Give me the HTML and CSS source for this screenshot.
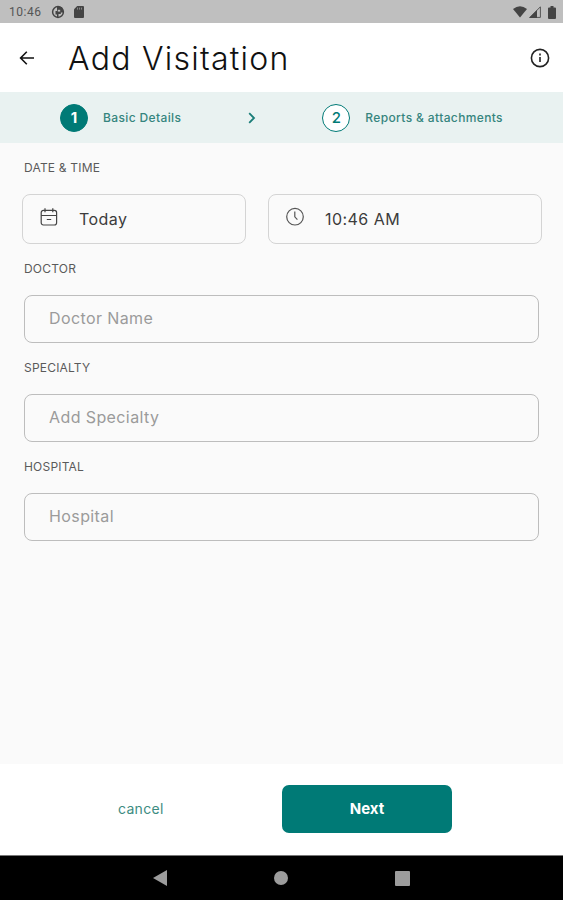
FILE: index.html
```
<!DOCTYPE html>
<html lang="en">
<head>
  <meta charset="UTF-8" />
  <meta name="viewport" content="width=device-width, initial-scale=1" />
  <title>Add Visitation</title>
  <link rel="stylesheet" href="styles.css">
</head>
<body>

  <div class="status-bar">
    <span class="status-time">10:46</span>
    <svg class="status-app" width="14" height="14" viewBox="0 0 14 14">
      <circle cx="7" cy="7" r="5.4" fill="none" stroke="#444" stroke-width="1.5" />
      <path d="M6 4.200V2h5l1.500 5.500H9.800V9H7.500v3.500H6V9.500H4.500V6H6z" fill="#444" />
      <path d="M6.800 4.800h2.400v1.800H6.800z" fill="#bfbfbf" />
    </svg>
    <svg class="status-card" width="10" height="12" viewBox="0 0 10 12">
      <path d="M3.2 0H9a1 1 0 0 1 1 1v10a1 1 0 0 1-1 1H1a1 1 0 0 1-1-1V3.2z" fill="#444" />
      <path d="M3.5 1.6v2M5.5 1.6v2M7.5 1.6v2" stroke="#999" stroke-width="0.8" />
    </svg>
    <div class="status-right">
      <svg width="14" height="12" viewBox="0 0 14 12">
        <path d="M0 3Q7-2.4 14 3L7 11.6z" fill="#444" />
      </svg>
      <svg width="12" height="12" viewBox="0 0 12 12">
        <path d="M11.4.8v10.6H.9z" fill="none" stroke="#555" stroke-width="1" />
        <path d="M8 4v8H0z" fill="#444" />
      </svg>
      <svg class="battery" width="8" height="13" viewBox="0 0 8 13">
        <path d="M2.5 0h3v1.4H7a1 1 0 0 1 1 1V12a1 1 0 0 1-1 1H1a1 1 0 0 1-1-1V2.400a1 1 0 0 1 1-1h1.500z" fill="#444" />
      </svg>
    </div>
  </div>

  <header class="header">
    <button class="icon-btn" aria-label="Back">
      <svg width="16" height="14" viewBox="0 0 16 14" fill="none" stroke="#111" stroke-width="1.6">
        <path d="M15 7H1.800M7.800 .8 1.600 7l6.200 6.200" />
      </svg>
    </button>
    <h1>Add Visitation</h1>
    <button class="icon-btn info" aria-label="Info">
      <svg width="20" height="20" viewBox="0 0 20 20" fill="none" stroke="#222" stroke-width="1.600">
        <circle cx="10" cy="10" r="8.600" />
        <path d="M10 9v5M10 5.600v1.800" />
      </svg>
    </button>
  </header>

  <div class="steps">
    <span class="step-number active">1</span>
    <span class="step-label">Basic Details</span>
    <svg class="chevron" width="8" height="12" viewBox="0 0 8 12" fill="none" stroke="#1a7d78" stroke-width="1.800">
      <path d="M1.200 1.200 6 6l-4.800 4.800" />
    </svg>
    <span class="step-number">2</span>
    <span class="step-label">Reports &amp; attachments</span>
  </div>

  <main class="form">
    <div class="label">DATE &amp; TIME</div>
    <div class="date-row">
      <button class="picker date">
        <svg width="18" height="20" viewBox="0 0 18 20" fill="none" stroke="#444" stroke-width="1.200">
          <rect x="1.200" y="3.300" width="15.400" height="14.700" rx="2.200" />
          <path d="M1.200 8.500h15.400M5 1.200v4M12.800 1.200v4M6.800 12.500h4.400" />
        </svg>
        <span>Today</span>
      </button>
      <button class="picker time">
        <svg width="18" height="20" viewBox="0 0 18 20" fill="none" stroke="#555" stroke-width="1.200">
          <circle cx="9" cy="9.700" r="8.300" />
          <path d="M8.800 4.500v5.300l2.600 2.800" />
        </svg>
        <span>10:46 AM</span>
      </button>
    </div>

    <label class="label" for="doctor">DOCTOR</label>
    <input type="text" id="doctor" placeholder="Doctor Name" />

    <label class="label" for="specialty">SPECIALTY</label>
    <input type="text" id="specialty" placeholder="Add Specialty" />

    <label class="label" for="hospital">HOSPITAL</label>
    <input type="text" id="hospital" placeholder="Hospital" />
  </main>

  <footer class="actions">
    <button class="cancel">cancel</button>
    <button class="next">Next</button>
  </footer>

  <nav class="nav-bar">
    <svg width="14" height="16" viewBox="0 0 14 16"><path d="M14 0v16L0 8z" fill="#9c9c9c" /></svg>
    <svg width="14" height="14" viewBox="0 0 14 14"><circle cx="7" cy="7" r="7" fill="#9c9c9c" /></svg>
    <svg width="15" height="15" viewBox="0 0 15 15"><rect width="15" height="15" rx="1" fill="#9c9c9c" /></svg>
  </nav>

</body>
</html>
```
FILE: styles.css
```
:root {
  --teal: #007a76;
  --page-bg: #fafafa;
  --step-bg: #e9f2f1;
}

* {
  box-sizing: border-box;
}

body {
  margin: 0;
  height: 100vh;
  display: flex;
  flex-direction: column;
  background: var(--page-bg);
  font-family: Inter, sans-serif;
  overflow: hidden;
}

button {
  border: none;
  background: none;
  padding: 0;
  font-family: inherit;
  cursor: pointer;
}

svg {
  display: block;
  flex-shrink: 0;
}

.status-bar {
  height: 23px;
  display: flex;
  align-items: center;
  padding: 1px 7px 0 9px;
  background: #bfbfbf;
}

.status-time {
  width: 42px;
  font-family: Roboto, sans-serif;
  font-size: 12px;
  letter-spacing: 0.5px;
  color: #555;
}

.status-card {
  margin-left: 9px;
}

.status-right {
  display: flex;
  align-items: center;
  gap: 2px;
  margin-left: auto;
}

.battery {
  margin-left: 5px;
}

.header {
  height: 69px;
  display: flex;
  align-items: center;
  padding: 0 13px 0 19px;
  background: #fff;
}

.header h1 {
  margin: 2px 0 0 33px;
  font-size: 32px;
  font-weight: 300;
  line-height: 40px;
  letter-spacing: 1.25px;
  color: #111;
  white-space: nowrap;
}

.info {
  margin-left: auto;
}

.steps {
  height: 51px;
  display: flex;
  align-items: center;
  padding-left: 60px;
  background: var(--step-bg);
}

.step-number {
  width: 28px;
  height: 28px;
  display: flex;
  align-items: center;
  justify-content: center;
  border: 1.5px solid var(--teal);
  border-radius: 50%;
  background: #fff;
  color: var(--teal);
  font-size: 15px;
  font-weight: 500;
}

.step-number.active {
  background: var(--teal);
  color: #fff;
  font-weight: 700;
}

.step-label {
  margin-left: 15px;
  font-size: 12px;
  font-weight: 500;
  letter-spacing: 0.37px;
  color: #35857e;
}

.chevron {
  margin: 0 66px 0 67px;
}

.form {
  flex: 1;
  padding: 15px 24px 0;
}

.label {
  display: block;
  height: 20px;
  line-height: 20px;
  font-size: 12px;
  letter-spacing: 0.2px;
  color: #5a5a5a;
}

.date-row {
  display: grid;
  grid-template-columns: 224px 274px;
  gap: 22px;
  margin: 16px -2px 15px;
}

.picker {
  height: 50px;
  display: flex;
  align-items: center;
  gap: 21px;
  padding-left: 17px;
  border: 1px solid #d4d4d4;
  border-radius: 8px;
  font-size: 16px;
  letter-spacing: 0.45px;
  color: #3c3c3c;
}

.picker svg {
  margin-bottom: 4px;
}

input {
  display: block;
  width: 515px;
  height: 48px;
  margin: 16px 0 15px;
  padding: 0 24px 2px;
  border: 1px solid #bdbdbd;
  border-radius: 8px;
  background: transparent;
  font-family: inherit;
  font-size: 16px;
  letter-spacing: 0.4px;
}

input::placeholder {
  color: #9b9b9b;
}

.actions {
  height: 91px;
  display: flex;
  align-items: center;
  padding-left: 118px;
  background: #fff;
}

.cancel {
  width: 164px;
  margin-bottom: 2px;
  text-align: left;
  font-size: 14px;
  letter-spacing: 0.3px;
  color: #3d8c82;
}

.next {
  width: 170px;
  height: 48px;
  margin-bottom: 1px;
  padding-bottom: 1px;
  border-radius: 7px;
  background: var(--teal);
  color: #fff;
  font-size: 15px;
  font-weight: 700;
}

.nav-bar {
  height: 45px;
  display: flex;
  align-items: center;
  gap: 107px;
  padding-left: 153px;
  border-top: 1px solid #777;
  background: #000;
}
```
